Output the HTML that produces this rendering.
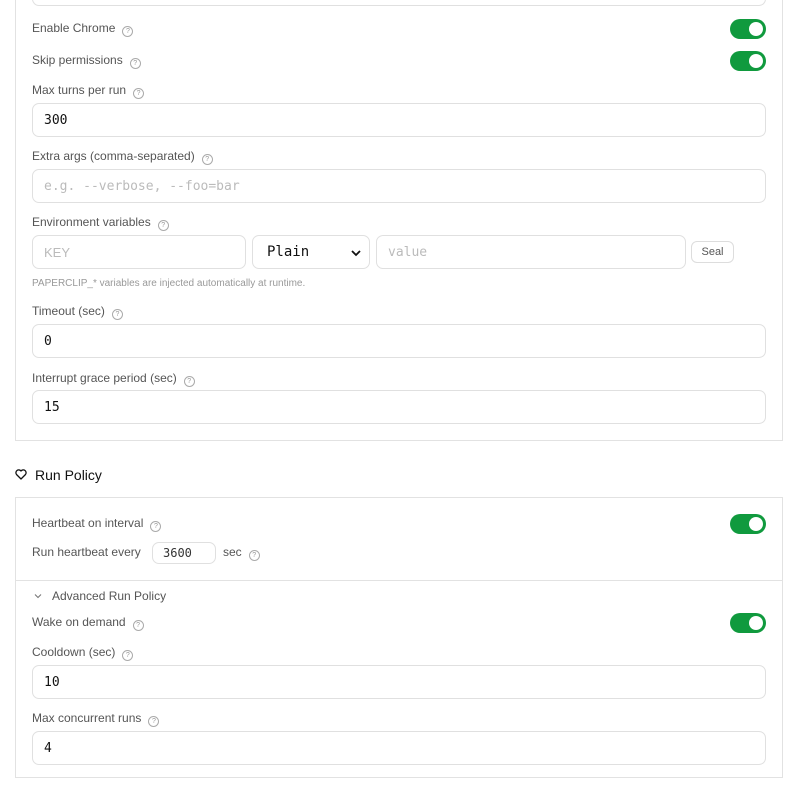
<!DOCTYPE html>
<html><head><meta charset="utf-8"><style>
*{box-sizing:border-box;margin:0;padding:0}
body{width:799px;height:792px;background:#fff;position:relative;overflow:hidden;font-family:"Liberation Sans",sans-serif}
.a{position:absolute}
.box{position:absolute;border:1px solid #e2e2e2;background:#fff}
.lbl{position:absolute;font-size:12px;color:#555;line-height:14px;white-space:nowrap}
.q{display:inline-block;width:11px;height:11px;border:1px solid #aaa;border-radius:50%;font-size:7px;line-height:9px;text-align:center;color:#999;margin-left:7px;vertical-align:-1px}
.in{position:absolute;border:1px solid #e0e0e0;border-radius:7px;font-family:"DejaVu Sans Mono","Liberation Mono",monospace;font-size:13px;color:#111;padding-left:11px;display:flex;align-items:center}
.ph{color:#bbb}
.tg{position:absolute;width:36px;height:20px;border-radius:10px;background:#109a3e}
.tg::after{content:"";position:absolute;right:3px;top:3px;width:14px;height:14px;border-radius:50%;background:#fff}
</style></head><body>
<div class="box" style="left:15px;top:-20px;width:768px;height:461px;border-top:none"></div>
<div class="in" style="left:32px;top:-28px;width:734px;height:34px"></div>

<div class="lbl" style="left:32px;top:21px">Enable Chrome<span class="q">?</span></div>
<div class="tg" style="left:730px;top:19px"></div>
<div class="lbl" style="left:32px;top:53px">Skip permissions<span class="q">?</span></div>
<div class="tg" style="left:730px;top:51px"></div>
<div class="lbl" style="left:32px;top:83px">Max turns per run<span class="q">?</span></div>
<div class="in" style="left:32px;top:103px;width:734px;height:34px">300</div>
<div class="lbl" style="left:32px;top:149px">Extra args (comma-separated)<span class="q">?</span></div>
<div class="in ph" style="left:32px;top:169px;width:734px;height:34px">e.g. --verbose, --foo=bar</div>
<div class="lbl" style="left:32px;top:215px">Environment variables<span class="q">?</span></div>
<div class="in ph" style="left:32px;top:235px;width:214px;height:34px;font-family:'Liberation Sans',sans-serif;font-size:13px">KEY</div>
<div class="in" style="left:252px;top:235px;width:118px;height:34px;padding-left:14px;font-size:14px">Plain<svg class="a" style="right:8px;top:13px" width="10" height="8" viewBox="0 0 10 8"><path d="M1 2l4 4 4-4" fill="none" stroke="#111" stroke-width="1.8"/></svg></div>
<div class="in ph" style="left:376px;top:235px;width:310px;height:34px;font-size:13px">value</div>
<div class="a" style="left:691px;top:241px;width:43px;height:22px;border:1px solid #ddd;border-radius:6px;font-size:11px;color:#555;text-align:center;line-height:20px">Seal</div>
<div class="lbl" style="left:32px;top:277px;font-size:10px;color:#999">PAPERCLIP_* variables are injected automatically at runtime.</div>
<div class="lbl" style="left:32px;top:304px">Timeout (sec)<span class="q">?</span></div>
<div class="in" style="left:32px;top:324px;width:734px;height:34px">0</div>
<div class="lbl" style="left:32px;top:371px">Interrupt grace period (sec)<span class="q">?</span></div>
<div class="in" style="left:32px;top:390px;width:734px;height:34px">15</div>

<svg class="a" style="left:15px;top:469px" width="12" height="11" viewBox="0 0 12 11"><path d="M6 10L1.5 5.5A2.6 2.6 0 0 1 6 2a2.6 2.6 0 0 1 4.5 3.5z" fill="none" stroke="#111" stroke-width="1.3" stroke-linejoin="round"/></svg>
<div class="lbl" style="left:35px;top:467px;font-size:14px;color:#111;line-height:16px">Run Policy</div>

<div class="box" style="left:15px;top:497px;width:768px;height:281px"></div>
<div class="a" style="left:16px;top:580px;width:766px;height:1px;background:#e2e2e2"></div>
<div class="lbl" style="left:32px;top:516px">Heartbeat on interval<span class="q">?</span></div>
<div class="tg" style="left:730px;top:514px"></div>
<div class="lbl" style="left:32px;top:545px">Run heartbeat every</div>
<div class="in" style="left:152px;top:542px;width:64px;height:22px;font-size:12px;color:#333;padding-left:10px">3600</div>
<div class="lbl" style="left:223px;top:545px">sec<span class="q">?</span></div>
<svg class="a" style="left:34px;top:593px" width="8" height="6" viewBox="0 0 8 6"><path d="M1 1.5l3 3 3-3" fill="none" stroke="#777" stroke-width="1.1"/></svg>
<div class="lbl" style="left:52px;top:589px">Advanced Run Policy</div>
<div class="lbl" style="left:32px;top:615px">Wake on demand<span class="q">?</span></div>
<div class="tg" style="left:730px;top:613px"></div>
<div class="lbl" style="left:32px;top:645px">Cooldown (sec)<span class="q">?</span></div>
<div class="in" style="left:32px;top:665px;width:734px;height:34px">10</div>
<div class="lbl" style="left:32px;top:711px">Max concurrent runs<span class="q">?</span></div>
<div class="in" style="left:32px;top:731px;width:734px;height:34px">4</div>
</body></html>
